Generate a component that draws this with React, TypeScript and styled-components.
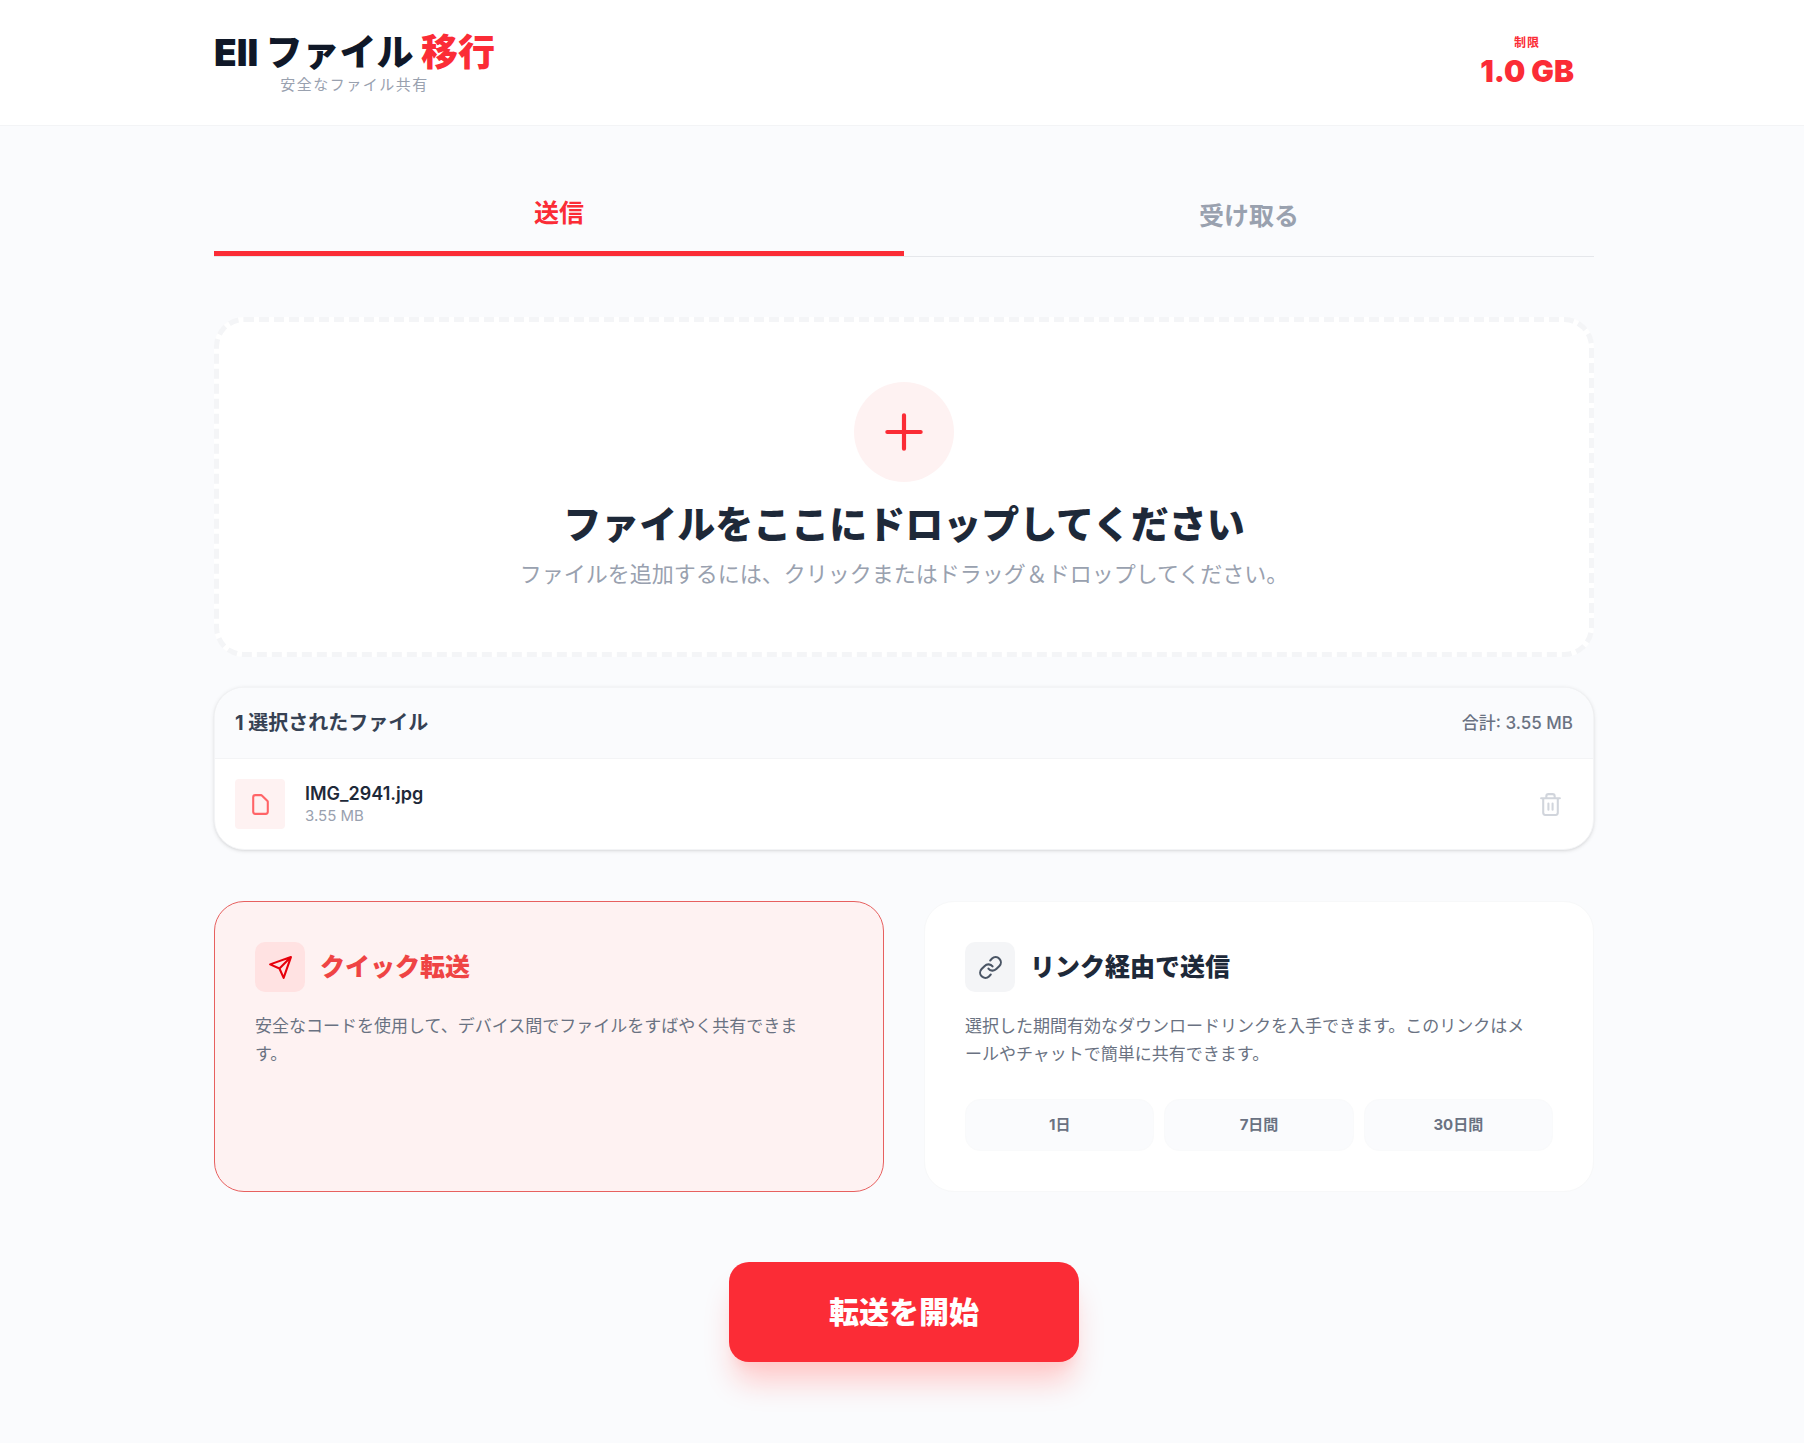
import React, { useState } from "react";
import styled, { createGlobalStyle, css } from "styled-components";

const GlobalStyle = createGlobalStyle`
  *, *::before, *::after { box-sizing: border-box; }
  body {
    margin: 0;
    background: #fafbfd;
    color: #1e2939;
    font-family: Inter, "Noto Sans CJK JP", sans-serif;
    font-size: 20px;
    line-height: 30px;
  }
  h1, h2, h3, p, ul { margin: 0; padding: 0; }
  ul { list-style: none; }
  button { font: inherit; color: inherit; border: 0; background: none; padding: 0; cursor: pointer; }
`;

const Header = styled.header`
  background: #ffffff;
  border-bottom: 1px solid #f3f4f6;
  padding: 30px 30px 30px 34px;
`;

const HeaderInner = styled.div`
  max-width: 1380px;
  margin: 0 auto;
  display: flex;
  align-items: center;
  justify-content: space-between;
`;

const Brand = styled.div`
  display: flex;
  flex-direction: column;
  align-items: center;
`;

const BrandName = styled.h1`
  font-size: 37px;
  line-height: 45px;
  font-weight: 900;
  color: #101828;
`;

const Accent = styled.span`
  color: #fb2c36;
`;

const Tagline = styled.p`
  font-size: 15px;
  line-height: 20px;
  letter-spacing: 0.1em;
  color: #99a1af;
`;

const Limit = styled.div`
  display: flex;
  flex-direction: column;
  align-items: center;
  padding: 0 20px;
  color: #fb2c36;
`;

const LimitLabel = styled.span`
  font-size: 12px;
  line-height: 16px;
  font-weight: 700;
  letter-spacing: 0.1em;
`;

const LimitValue = styled.span`
  font-size: 30px;
  line-height: 40px;
  font-weight: 900;
`;

const Main = styled.main`
  max-width: 1444px;
  margin: 0 auto;
  padding: 50px 30px 80px 34px;
`;

const Tabs = styled.div`
  display: flex;
  border-bottom: 1px solid #e5e7eb;
  margin-bottom: 60px;
`;

const Tab = styled.button<{ $active: boolean }>`
  flex: 1;
  min-height: 80px;
  font-size: 25px;
  line-height: 35px;
  font-weight: 700;
  color: ${(p) => (p.$active ? "#fb2c36" : "#99a1af")};
  border-bottom: ${(p) => (p.$active ? "5px solid #fb2c36" : "0")};
`;

const DropZone = styled.button`
  display: flex;
  flex-direction: column;
  align-items: center;
  width: 100%;
  padding: 60px;
  background: #ffffff;
  border: 5px dashed #f4f5f7;
  border-radius: 30px;
`;

const PlusCircle = styled.span`
  display: grid;
  place-items: center;
  width: 100px;
  height: 100px;
  border-radius: 50%;
  background: #fef2f2;
  color: #fb2c36;
  margin-bottom: 20px;
`;

const DropTitle = styled.span`
  font-size: 38px;
  line-height: 45px;
  font-weight: 800;
  color: #1e2939;
  margin-bottom: 10px;
`;

const DropHint = styled.span`
  font-size: 22px;
  line-height: 35px;
  color: #99a1af;
`;

const FileCard = styled.section`
  margin-top: 30px;
  background: #ffffff;
  border: 1px solid #f3f4f6;
  border-radius: 30px;
  overflow: hidden;
  box-shadow: 0 1px 4px rgba(0, 0, 0, 0.1), 0 1px 3px -1px rgba(0, 0, 0, 0.1);
`;

const FileCardHead = styled.div`
  display: flex;
  justify-content: space-between;
  align-items: center;
  padding: 20px;
  background: #fafbfd;
  border-bottom: 1px solid #f3f4f6;
`;

const FileCount = styled.h2`
  font-size: 20px;
  line-height: 30px;
  font-weight: 700;
  color: #364153;
`;

const FileTotal = styled.span`
  font-size: 17px;
  line-height: 25px;
  font-weight: 500;
  color: #6a7282;
`;

const FileRow = styled.li`
  display: flex;
  align-items: center;
  gap: 20px;
  padding: 20px;
`;

const iconBox = css`
  display: grid;
  place-items: center;
  flex: none;
  width: 50px;
  height: 50px;
`;

const FileIconBox = styled.span`
  ${iconBox}
  border-radius: 4px;
  background: #fef2f2;
  color: #ff6467;
`;

const FileText = styled.div`
  flex: 1;
  min-width: 0;
`;

const FileName = styled.p`
  font-size: 18px;
  line-height: 24px;
  font-weight: 600;
  color: #1e2939;
`;

const FileSize = styled.p`
  font-size: 15px;
  line-height: 20px;
  color: #99a1af;
`;

const DeleteButton = styled.button`
  display: grid;
  place-items: center;
  padding: 10px;
  color: #d1d5dc;
`;

const Options = styled.div`
  display: grid;
  grid-template-columns: repeat(2, minmax(0, 1fr));
  gap: 40px;
  margin-top: 51px;
`;

const OptionCard = styled.section<{ $selected: boolean }>`
  padding: 40px;
  border-radius: 30px;
  background: ${(p) => (p.$selected ? "#fef2f2" : "#ffffff")};
  border: 1px solid ${(p) => (p.$selected ? "#e7605f" : "#f7f8f9")};
  cursor: pointer;
`;

const OptionHead = styled.div`
  display: flex;
  align-items: center;
  gap: 15px;
  margin-bottom: 20px;
`;

const OptionIcon = styled.span<{ $selected: boolean }>`
  ${iconBox}
  border-radius: 10px;
  background: ${(p) => (p.$selected ? "#ffe2e2" : "#f4f5f7")};
  color: ${(p) => (p.$selected ? "#e7000b" : "#4a5565")};
`;

const OptionTitle = styled.h3<{ $selected: boolean }>`
  font-size: 25px;
  line-height: 35px;
  font-weight: 800;
  color: ${(p) => (p.$selected ? "#ef4444" : "#1e2939")};
`;

const OptionText = styled.p`
  font-size: 17px;
  line-height: 28px;
  color: #6a7282;
  padding-right: 16px;
`;

const Durations = styled.div`
  display: grid;
  grid-template-columns: repeat(3, 1fr);
  gap: 10px;
  margin-top: 31px;
`;

const Duration = styled.button`
  padding: 15px;
  font-size: 15px;
  line-height: 20px;
  font-weight: 700;
  color: #6a7282;
  background: #fafbfd;
  border: 1px solid #f9fafb;
  border-radius: 15px;
`;

const Actions = styled.div`
  display: flex;
  justify-content: center;
  margin-top: 70px;
`;

const StartButton = styled.button`
  padding: 30px 100px;
  font-size: 30px;
  line-height: 40px;
  font-weight: 900;
  color: #ffffff;
  background: #fb2c36;
  border-radius: 20px;
  box-shadow: 0 25px 31px -6px #ffc9c9, 0 10px 12px -8px #ffc9c9;
`;

type IconProps = { d: string; size?: number };

const Icon = ({ d, size = 25 }: IconProps) => (
  <svg
    width={size}
    height={size}
    viewBox="0 0 24 24"
    fill="none"
    stroke="currentColor"
    strokeWidth="2"
    strokeLinecap="round"
    strokeLinejoin="round"
    aria-hidden="true"
  >
    <path d={d} />
  </svg>
);

const icons = {
  plus: "M12 4v16m8-8H4",
  file: "M7 21h10a2 2 0 002-2V9.414a1 1 0 00-.293-.707l-5.414-5.414A1 1 0 0012.586 3H7a2 2 0 00-2 2v14a2 2 0 002 2z",
  trash: "M3 6h18M19 6v14a2 2 0 01-2 2H7a2 2 0 01-2-2V6m3 0V4a2 2 0 012-2h4a2 2 0 012 2v2M10 11v6M14 11v6",
  send: "M22 2L11 13M22 2l-7 20-4-9-9-4 20-7z",
  link: "M10 13a5 5 0 007.54.54l3-3a5 5 0 00-7.07-7.07l-1.72 1.71M14 11a5 5 0 00-7.54-.54l-3 3a5 5 0 007.07 7.07l1.71-1.71",
};

const durations = ["1日", "7日間", "30日間"];

export default function App() {
  const [tab, setTab] = useState(0);
  return (
    <>
      <GlobalStyle />
      <Header>
        <HeaderInner>
          <Brand>
            <BrandName>
              EII ファイル <Accent>移行</Accent>
            </BrandName>
            <Tagline>安全なファイル共有</Tagline>
          </Brand>
          <Limit>
            <LimitLabel>制限</LimitLabel>
            <LimitValue>1.0 GB</LimitValue>
          </Limit>
        </HeaderInner>
      </Header>
      <Main>
        <Tabs role="tablist">
          {["送信", "受け取る"].map((label, i) => (
            <Tab key={label} role="tab" aria-selected={tab === i} $active={tab === i} onClick={() => setTab(i)}>
              {label}
            </Tab>
          ))}
        </Tabs>
        <DropZone>
          <PlusCircle>
            <Icon d={icons.plus} size={50} />
          </PlusCircle>
          <DropTitle>ファイルをここにドロップしてください</DropTitle>
          <DropHint>ファイルを追加するには、クリックまたはドラッグ＆ドロップしてください。</DropHint>
        </DropZone>
        <FileCard>
          <FileCardHead>
            <FileCount>1 選択されたファイル</FileCount>
            <FileTotal>合計: 3.55 MB</FileTotal>
          </FileCardHead>
          <ul>
            <FileRow>
              <FileIconBox>
                <Icon d={icons.file} />
              </FileIconBox>
              <FileText>
                <FileName>IMG_2941.jpg</FileName>
                <FileSize>3.55 MB</FileSize>
              </FileText>
              <DeleteButton aria-label="削除">
                <Icon d={icons.trash} />
              </DeleteButton>
            </FileRow>
          </ul>
        </FileCard>
        <Options>
          <OptionCard $selected>
            <OptionHead>
              <OptionIcon $selected>
                <Icon d={icons.send} />
              </OptionIcon>
              <OptionTitle $selected>クイック転送</OptionTitle>
            </OptionHead>
            <OptionText>安全なコードを使用して、デバイス間でファイルをすばやく共有できます。</OptionText>
          </OptionCard>
          <OptionCard $selected={false}>
            <OptionHead>
              <OptionIcon $selected={false}>
                <Icon d={icons.link} />
              </OptionIcon>
              <OptionTitle $selected={false}>リンク経由で送信</OptionTitle>
            </OptionHead>
            <OptionText>
              選択した期間有効なダウンロードリンクを入手できます。このリンクはメールやチャットで簡単に共有できます。
            </OptionText>
            <Durations>
              {durations.map((label) => (
                <Duration key={label}>{label}</Duration>
              ))}
            </Durations>
          </OptionCard>
        </Options>
        <Actions>
          <StartButton>転送を開始</StartButton>
        </Actions>
      </Main>
    </>
  );
}
